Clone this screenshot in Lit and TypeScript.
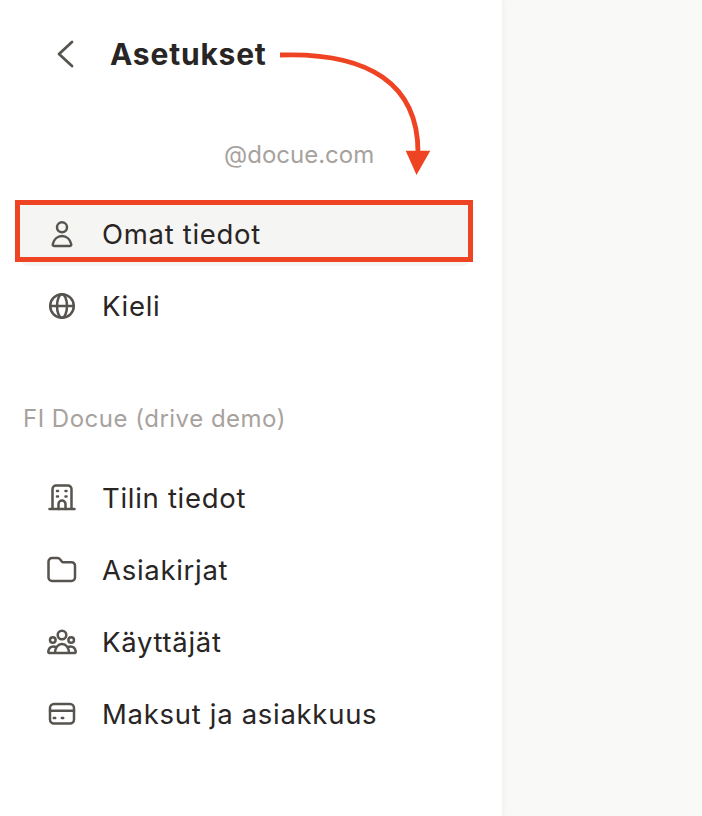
import { LitElement, html, css, svg } from "lit";
import { customElement } from "lit/decorators.js";

const icons: Record<string, unknown> = {
  user: svg`<circle cx="15" cy="8.300" r="5"/><path d="M7.500 27c-1.300 0-2-.8-1.700-2 1-4.500 4.600-8 9.200-8s8.200 3.500 9.200 8c.3 1.200-.4 2-1.700 2z"/>`,
  globe: svg`<circle cx="15" cy="15" r="11.800"/><path d="M3.200 15h23.600"/><ellipse cx="15" cy="15" rx="5" ry="11.800"/>`,
  building: svg`<path d="M2.500 26h25M5.500 26V6a3.500 3.500 0 0 1 3.500-3.500h12a3.500 3.500 0 0 1 3.500 3.500v20"/><path d="M11.500 26v-5a3.500 3.500 0 0 1 7 0v5"/><path class="dots" d="M10 8h1M18.500 8h1M10 13.500h1M18.500 13.500h1"/>`,
  folder: svg`<path d="M1.500 6.500a3.500 3.500 0 0 1 3.500-3.500h5.500c1.200 0 2 .5 2.700 1.400l1.600 2.100c.4.500.8.700 1.400.7h8.300a3.500 3.500 0 0 1 3.500 3.500v11.800a3.500 3.500 0 0 1-3.500 3.500h-19.500a3.500 3.500 0 0 1-3.500-3.500z"/>`,
  users: svg`<circle cx="15" cy="8" r="4.300"/><circle cx="5.800" cy="13" r="2.800"/><circle cx="24.200" cy="13" r="2.800"/><path d="M8 26c0-5.500 3-9 7-9s7 3.500 7 9zM8 26H2.500c-1 0-1.300-.6-1.200-1.500.4-3 2.500-5 5.200-5 1 0 1.900.3 2.700.8M22 26h5.500c1 0 1.300-.6 1.200-1.500-.4-3-2.500-5-5.200-5-1 0-1.900.3-2.700.8"/>`,
  card: svg`<rect x="3" y="5" width="24" height="19.500" rx="4"/><path d="M3 11.700h24"/><path class="dots" d="M6.800 19h1.400M14.800 19h1.400"/>`,
};

@customElement("app-root")
export class AppRoot extends LitElement {
  static styles = css`
    :host {
      display: block;
      position: relative;
      width: 702px;
      height: 816px;
      overflow: hidden;
      background: #f9f9f8;
      font-family: "Inter", "Noto Sans", sans-serif;
      color: #292524;
    }
    .side {
      width: 503px;
      height: 816px;
      box-sizing: border-box;
      background: #fff;
      border-right: 1px solid #f3f3f1;
      box-shadow: 1px 0 4px rgba(0, 0, 0, 0.04);
      padding: 18px 32px 0 20px;
      display: flex;
      flex-direction: column;
    }
    .head {
      display: flex;
      align-items: center;
      height: 72px;
      padding-left: 32px;
      gap: 32px;
    }
    .back {
      width: 26px;
      height: 30px;
      fill: none;
      stroke: #57534e;
      stroke-width: 2.800;
      stroke-linecap: round;
      stroke-linejoin: round;
      flex: none;
    }
    h1 {
      margin: 0;
      font-size: 30px;
      line-height: 40px;
      font-weight: 700;
      letter-spacing: 0.8px;
    }
    .mail {
      font-size: 24px;
      line-height: 32px;
      color: #a8a29e;
      margin: 49px 0 0 204px;
    }
    .list {
      display: flex;
      flex-direction: column;
      gap: 8px;
    }
    .first {
      margin-top: 31px;
    }
    .row {
      display: flex;
      align-items: center;
      gap: 25px;
      height: 64px;
      padding-left: 27px;
      border-radius: 8px;
      font-size: 27.500px;
      letter-spacing: 0.7px;
    }
    .row.active {
      background: #f5f5f3;
    }
    .row svg {
      width: 30px;
      height: 30px;
      flex: none;
      fill: none;
      stroke: #57534e;
      stroke-width: 2.500;
      stroke-linecap: round;
      stroke-linejoin: round;
    }
    .dots {
      stroke-width: 2.500;
    }
    .section {
      font-size: 24px;
      line-height: 32px;
      color: #a8a29e;
      margin: 65px 0 0 3px;
      letter-spacing: 0.5px;
    }
    .second {
      margin-top: 31px;
    }
    .note {
      position: absolute;
      left: 0;
      top: 0;
      width: 702px;
      height: 816px;
      pointer-events: none;
    }
    .box {
      position: absolute;
      left: 15px;
      top: 200px;
      width: 458px;
      height: 62px;
      box-sizing: border-box;
      border: 5px solid #ee4423;
    }
  `;

  private row(icon: string, label: string, active = false) {
    return html`<div class="row ${active ? "active" : ""}">
      <svg viewBox="0 0 30 30">${icons[icon]}</svg><span>${label}</span>
    </div>`;
  }

  render() {
    return html`
      <div class="side">
        <div class="head">
          <svg class="back" viewBox="0 0 26 30"><path d="M20 3 7 15l13 12"/></svg>
          <h1>Asetukset</h1>
        </div>
        <div class="mail">@docue.com</div>
        <div class="list first">
          ${this.row("user", "Omat tiedot", true)} ${this.row("globe", "Kieli")}
        </div>
        <div class="section">FI Docue (drive demo)</div>
        <div class="list second">
          ${this.row("building", "Tilin tiedot")} ${this.row("folder", "Asiakirjat")}
          ${this.row("users", "Käyttäjät")} ${this.row("card", "Maksut ja asiakkuus")}
        </div>
      </div>
      <div class="box"></div>
      <svg class="note" viewBox="0 0 702 816">
        <path d="M280 55C370 52 418 85 418 152" fill="none" stroke="#ee4423" stroke-width="4.800"/>
        <path d="M405.700 150.700h24.600L416.500 175z" fill="#ee4423"/>
      </svg>
    `;
  }
}
